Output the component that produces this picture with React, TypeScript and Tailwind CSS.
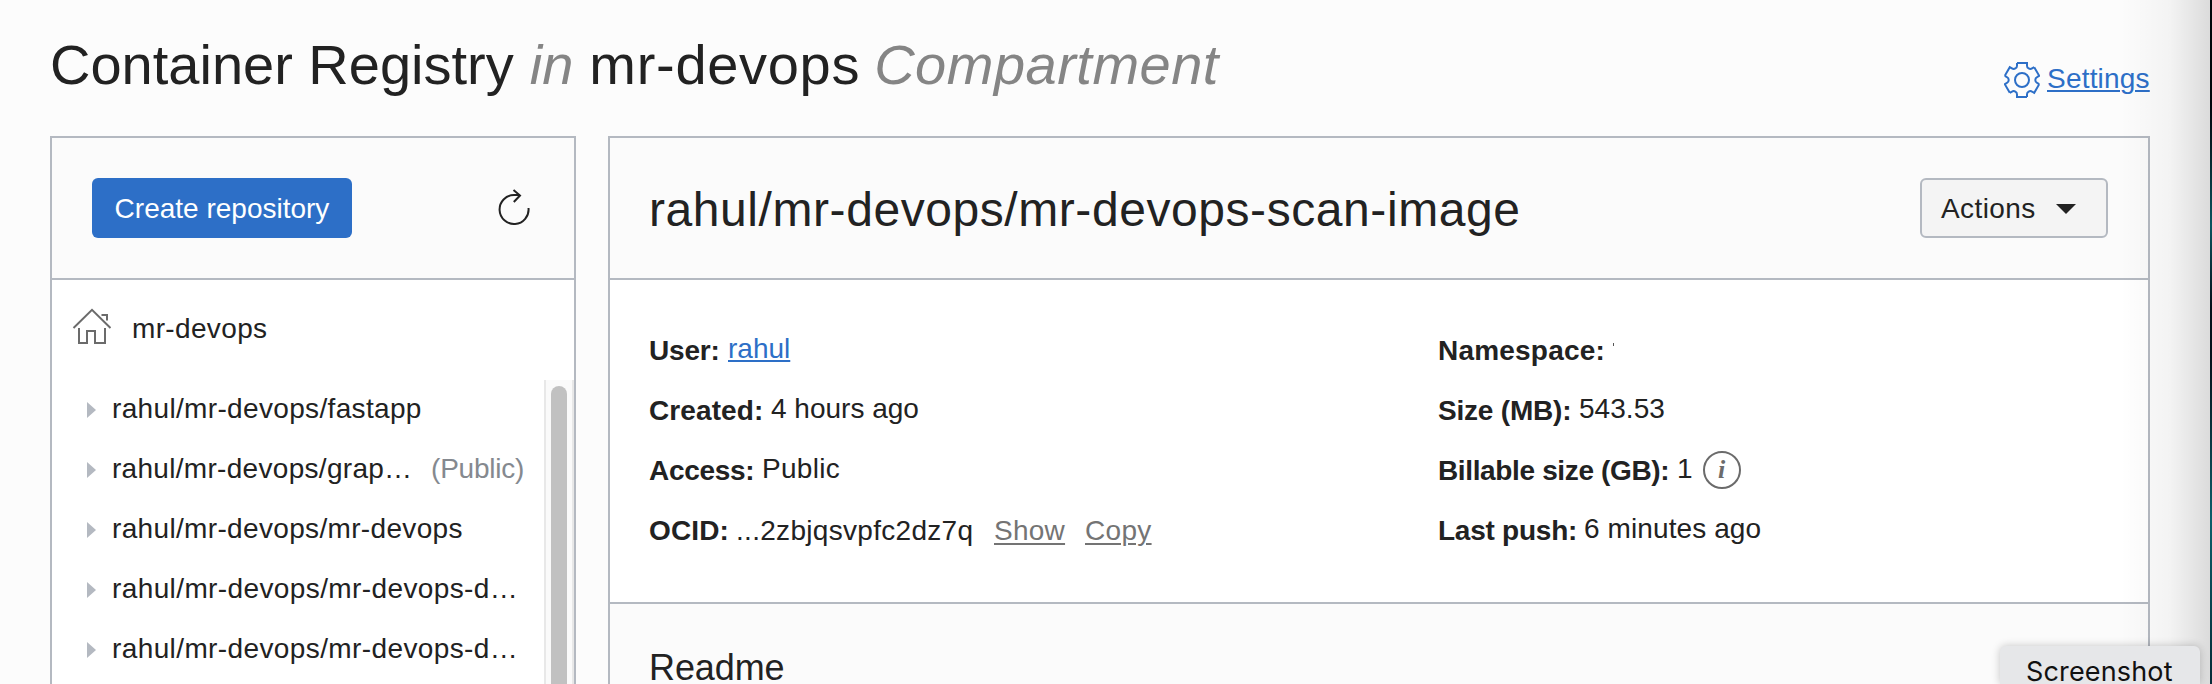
import type { ReactNode } from "react";

const repositories = [
  { name: "rahul/mr-devops/fastapp", tracking: "tracking-[0.34px]" },
  { name: "rahul/mr-devops/grap…", tracking: "tracking-[0.3px]", isPublic: true },
  { name: "rahul/mr-devops/mr-devops", tracking: "tracking-[0.34px]" },
  { name: "rahul/mr-devops/mr-devops-d…", tracking: "tracking-[0.39px]" },
  { name: "rahul/mr-devops/mr-devops-d…", tracking: "tracking-[0.39px]" },
];

function GearIcon() {
  return (
    <svg width="36" height="36" viewBox="-18 -18 36 36" fill="none" stroke="#2d6fc7" strokeWidth="2">
      {[0, 60, 120, 180, 240, 300].map((angle) => (
        <path
          key={angle}
          transform={`rotate(${angle})`}
          d="M-5 -17H5V-14.5A3.3 3.3 0 0 0 10.06 -11.58L12.22 -12.83"
        />
      ))}
      <circle r="7" />
    </svg>
  );
}

function RefreshIcon() {
  return (
    <svg width="32" height="38" viewBox="498 189 32 38" fill="none" stroke="#222" strokeWidth="2">
      <path d="M528.5 208A14.5 14.5 0 1 1 514 195H520" />
      <path d="M513.5 190L520 195.5L513.8 202" />
    </svg>
  );
}

function HouseIcon() {
  return (
    <svg width="40" height="40" viewBox="72 306 40 40" fill="none" stroke="#6b6b6b" strokeWidth="2">
      <path d="M73.5 328L92 309.8L110.5 328" />
      <path d="M101.5 315H107V320.5" />
      <path d="M79 328V343H87V331H95V343H105V328" />
    </svg>
  );
}

function Field({
  label,
  labelClass,
  children,
}: {
  label: string;
  labelClass: string;
  children?: ReactNode;
}) {
  return (
    <div className="flex h-[60px] items-center leading-[32px]">
      <span className={`shrink-0 pt-[2px] font-bold ${labelClass}`}>{label}</span>
      {children}
    </div>
  );
}

export default function App() {
  return (
    <div className="relative h-[684px] w-full overflow-hidden whitespace-nowrap bg-[#fcfcfc] font-['Liberation_Sans',Arial,sans-serif] text-[28px] text-[#222]">
      <header className="flex h-[136px] justify-between pl-[50px] pr-[62px]">
        <h1 className="flex pt-[33px] text-[56px] leading-[64px]">
          <span>Container Registry</span>
          <em className="ml-[16px] text-[#858585]">in</em>
          <span className="ml-[16px] tracking-[0.7px]">mr-devops</span>
          <em className="ml-[14px] tracking-[0.5px] text-[#858585]">Compartment</em>
        </h1>
        <div className="flex items-start pt-[62px] text-[#2d6fc7]">
          <GearIcon />
          <a className="ml-[7px] mt-px w-[103px] leading-[32px] tracking-[0.2px] underline decoration-2 underline-offset-[2px]">
            Settings
          </a>
        </div>
      </header>

      <main className="flex h-[548px] gap-[32px] pl-[50px] pr-[62px]">
        <aside className="flex w-[526px] shrink-0 flex-col border-x-2 border-t-2 border-[#b4b9c1] bg-white">
          <div className="flex h-[142px] shrink-0 items-center justify-between border-b-2 border-[#b4b9c1] bg-[#fbfbfb] pl-[40px] pr-[44px]">
            <button className="h-[60px] w-[260px] rounded-[6px] bg-[#2d6fc7] pt-[2px] text-white">
              Create repository
            </button>
            <RefreshIcon />
          </div>
          <div className="flex h-[100px] shrink-0 items-center pl-[20px]">
            <div className="mt-[-8px]">
              <HouseIcon />
            </div>
            <span className="ml-[20px] pb-[2px] tracking-[0.35px]">mr-devops</span>
          </div>
          <div className="flex h-[304px]">
            <ul className="flex-1">
              {repositories.map((repo, i) => (
                <li key={i} className="flex h-[60px] items-center pl-[35px]">
                  <svg width="9" height="16" viewBox="0 0 9 16" fill="#b4b9c1">
                    <path d="M0 0L9 8L0 16Z" />
                  </svg>
                  <span className={`ml-[16px] pb-[2px] leading-[32px] ${repo.tracking}`}>{repo.name}</span>
                  {repo.isPublic && (
                    <span className="ml-auto mr-[20px] pb-[2px] leading-[32px] tracking-[-0.25px] text-[#85898f]">
                      (Public)
                    </span>
                  )}
                </li>
              ))}
            </ul>
            <div className="flex w-[30px] justify-center border-l-2 border-r-2 border-[#e8e8e8] bg-[#fafafa] pt-[6px]">
              <div className="h-[298px] w-[16px] rounded-t-full bg-[#c1c1c1]" />
            </div>
          </div>
        </aside>

        <section className="flex flex-1 flex-col border-x-2 border-t-2 border-[#b4b9c1] bg-white">
          <div className="flex h-[142px] shrink-0 items-center justify-between border-b-2 border-[#b4b9c1] bg-[#fbfbfb] pl-[39px] pr-[40px]">
            <h2 className="pt-[4px] text-[48px] leading-[56px] tracking-[0.57px]">
              rahul/mr-devops/mr-devops-scan-image
            </h2>
            <button className="flex h-[60px] w-[188px] items-center rounded-[6px] border-2 border-[#b4b9c1] bg-[#f4f4f4] pl-[19px]">
              <span className="w-[95px] pt-[2px] text-left tracking-[0.4px]">Actions</span>
              <svg className="ml-[20px] mt-[2px]" width="20" height="10" viewBox="0 0 20 10" fill="#222">
                <path d="M0 0H20L10 10Z" />
              </svg>
            </button>
          </div>

          <div className="flex h-[324px] shrink-0 border-b-2 border-[#b4b9c1] pl-[39px] pt-[40px]">
            <div className="w-[789px]">
              <Field label="User:" labelClass="w-[79px] tracking-[-0.2px]">
                <a className="pb-[2px] text-[#2d6fc7] underline decoration-2 underline-offset-[2px]">rahul</a>
              </Field>
              <Field label="Created:" labelClass="w-[122px] tracking-[0.1px]">
                <span className="pb-[2px]">4 hours ago</span>
              </Field>
              <Field label="Access:" labelClass="w-[113px] tracking-[-0.3px]">
                <span className="pb-[2px] tracking-[0.3px]">Public</span>
              </Field>
              <Field label="OCID:" labelClass="w-[87px] tracking-[0.15px]">
                <span className="w-[258px] pt-[2px] tracking-[0.3px]">...2zbjqsvpfc2dz7q</span>
                <a className="w-[71px] pt-[2px] tracking-[0.25px] text-[#747474] underline decoration-2 underline-offset-[3px]">
                  Show
                </a>
                <a className="ml-[20px] pt-[2px] tracking-[0.3px] text-[#747474] underline decoration-2 underline-offset-[3px]">
                  Copy
                </a>
              </Field>
            </div>
            <div>
              <Field label="Namespace:" labelClass="w-[175px] tracking-[0.2px]">
                <span className="mb-[12px] h-[3px] w-px bg-[#555]" />
              </Field>
              <Field label="Size (MB):" labelClass="w-[141px] tracking-[-0.2px]">
                <span className="pb-[2px] tracking-[0.05px]">543.53</span>
              </Field>
              <Field label="Billable size (GB):" labelClass="w-[239px] tracking-[-0.36px]">
                <span className="pb-[2px]">1</span>
                <span className="ml-[10px] flex size-[38px] items-center justify-center rounded-full border-2 border-[#6b6b6b] font-['Liberation_Serif',serif] text-[26px] font-bold italic leading-none text-[#6b6b6b]">
                  i
                </span>
              </Field>
              <Field label="Last push:" labelClass="w-[146px] tracking-[-0.25px]">
                <span className="pb-[2px] tracking-[0.1px]">6 minutes ago</span>
              </Field>
            </div>
          </div>

          <div className="flex-1 bg-[#fbfbfb] pl-[39px] pt-[44px]">
            <h3 className="text-[36px] leading-[40px] tracking-[-0.1px]">Readme</h3>
          </div>
        </section>
      </main>

      <div className="absolute inset-y-0 right-[2px] w-[90px] bg-linear-to-r from-black/0 via-black/[0.035] via-55% to-black/[0.13]" />
      <div className="absolute inset-y-0 right-0 w-[2px] bg-linear-to-b from-[#02060c] from-15% via-[#0a5560] via-33% to-[#04101a] to-45%" />
      <div className="absolute bottom-0 right-0 h-[330px] w-[2px] bg-linear-to-b from-[#04101a] via-[#0b5f6b] to-[#062c38]" />

      <div className="absolute left-[2000px] top-[646px] h-[38px] w-[200px] rounded-t-[6px] bg-[#e6e7e9] pl-[26px] pt-[10px] font-['Inter',sans-serif] text-[27px] leading-[32px] tracking-[0.15px] text-[#111] shadow-[0_0_8px_rgba(0,0,0,0.22)]">
        Screenshot
      </div>
    </div>
  );
}
